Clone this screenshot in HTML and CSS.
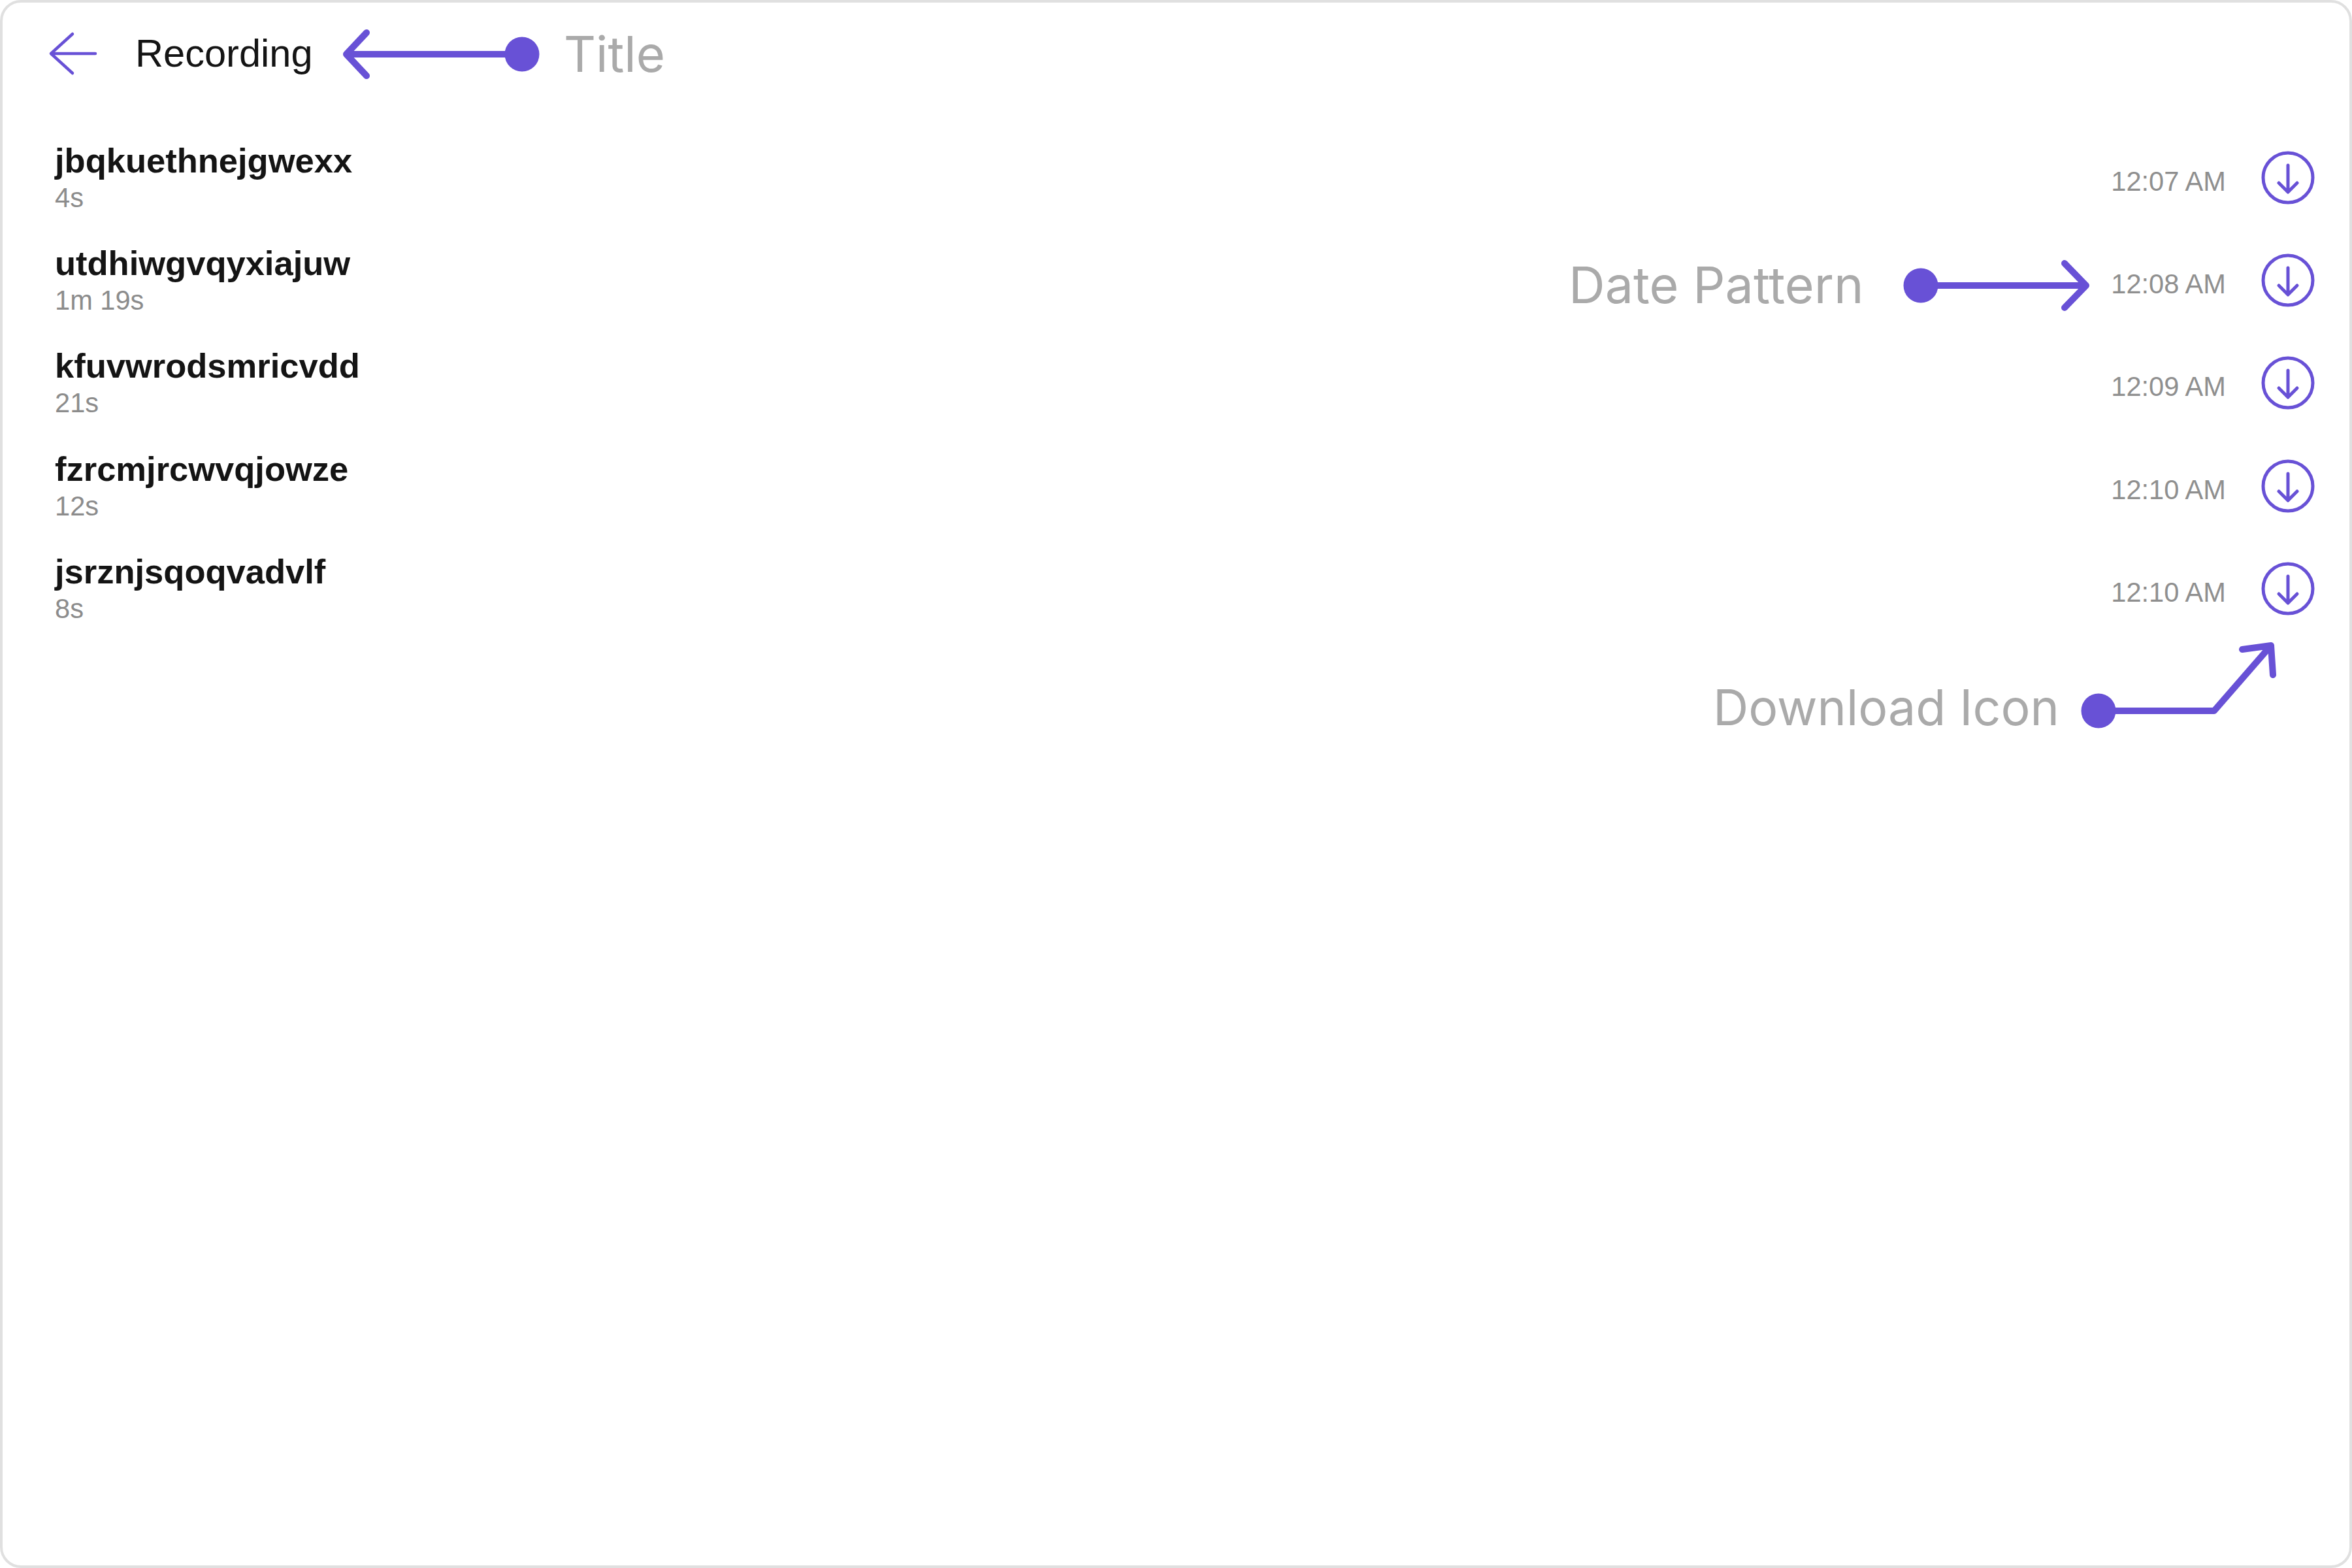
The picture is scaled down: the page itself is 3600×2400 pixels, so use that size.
FILE: index.html
```html
<!DOCTYPE html>
<html lang="en">
<head>
<meta charset="utf-8">
<title>Recording</title>
<link rel="stylesheet" href="styles.css">
</head>
<body>
<main class="card">
  <header class="head">
    <svg class="back" viewBox="0 0 76 72" width="76" height="72"><path d="M72 36H4M37 6 4 36l33 30" fill="none" stroke="#6851d6" stroke-width="4.500" stroke-linecap="round" stroke-linejoin="round"/></svg>
    <h1 class="title">Recording</h1>
  </header>
  <ul class="list">
    <li class="row">
      <div class="info"><div class="name">jbqkuethnejgwexx</div><div class="dur">4s</div></div>
      <span class="time">12:07 AM</span>
      <svg class="dl" viewBox="0 0 82 82" width="82" height="82"><circle cx="41" cy="41" r="38" fill="none" stroke="#6851d6" stroke-width="5"/><path d="M41 22V63M27 49 41 63 55 49" fill="none" stroke="#6851d6" stroke-width="5" stroke-linecap="round" stroke-linejoin="round"/></svg>
    </li>
    <li class="row">
      <div class="info"><div class="name">utdhiwgvqyxiajuw</div><div class="dur">1m 19s</div></div>
      <span class="time">12:08 AM</span>
      <svg class="dl" viewBox="0 0 82 82" width="82" height="82"><circle cx="41" cy="41" r="38" fill="none" stroke="#6851d6" stroke-width="5"/><path d="M41 22V63M27 49 41 63 55 49" fill="none" stroke="#6851d6" stroke-width="5" stroke-linecap="round" stroke-linejoin="round"/></svg>
    </li>
    <li class="row">
      <div class="info"><div class="name">kfuvwrodsmricvdd</div><div class="dur">21s</div></div>
      <span class="time">12:09 AM</span>
      <svg class="dl" viewBox="0 0 82 82" width="82" height="82"><circle cx="41" cy="41" r="38" fill="none" stroke="#6851d6" stroke-width="5"/><path d="M41 22V63M27 49 41 63 55 49" fill="none" stroke="#6851d6" stroke-width="5" stroke-linecap="round" stroke-linejoin="round"/></svg>
    </li>
    <li class="row">
      <div class="info"><div class="name">fzrcmjrcwvqjowze</div><div class="dur">12s</div></div>
      <span class="time">12:10 AM</span>
      <svg class="dl" viewBox="0 0 82 82" width="82" height="82"><circle cx="41" cy="41" r="38" fill="none" stroke="#6851d6" stroke-width="5"/><path d="M41 22V63M27 49 41 63 55 49" fill="none" stroke="#6851d6" stroke-width="5" stroke-linecap="round" stroke-linejoin="round"/></svg>
    </li>
    <li class="row">
      <div class="info"><div class="name">jsrznjsqoqvadvlf</div><div class="dur">8s</div></div>
      <span class="time">12:10 AM</span>
      <svg class="dl" viewBox="0 0 82 82" width="82" height="82"><circle cx="41" cy="41" r="38" fill="none" stroke="#6851d6" stroke-width="5"/><path d="M41 22V63M27 49 41 63 55 49" fill="none" stroke="#6851d6" stroke-width="5" stroke-linecap="round" stroke-linejoin="round"/></svg>
    </li>
  </ul>
  <svg class="callouts" viewBox="0 0 3600 2400" width="3600" height="2400">
    <g fill="none" stroke="#6851d6" stroke-width="10" stroke-linecap="round" stroke-linejoin="round">
      <path d="M800 83H530M561 50 530 83 561 116"/>
      <path d="M2940 437H3193M3160 403 3193 437 3160 471"/>
      <path d="M3212 1088H3389L3476 988M3432 994 3476 988 3479 1033"/>
    </g>
    <g fill="#6851d6">
      <circle cx="799" cy="83" r="26.500"/>
      <circle cx="2940" cy="437" r="26.500"/>
      <circle cx="3212" cy="1088" r="26.500"/>
    </g>
  </svg>
  <span class="note note-title">Title</span>
  <span class="note note-date">Date Pattern</span>
  <span class="note note-icon">Download Icon</span>
</main>
</body>
</html>
```

FILE: styles.css
```css
html, body {
  margin: 0;
  padding: 0;
  background: #fff;
}
.card {
  position: relative;
  box-sizing: border-box;
  width: 3600px;
  height: 2400px;
  border: 4px solid #e0e0e0;
  border-radius: 32px;
  background: #fff;
  font-family: "Liberation Sans", Arial, sans-serif;
  color: #141414;
}
.head {
  display: flex;
  align-items: center;
  height: 156px;
  padding-left: 70px;
}
.back {
  flex: none;
  margin-right: 57px;
}
.title {
  margin: 0;
  font-size: 59.600px;
  font-weight: 400;
  line-height: 72px;
}
.list {
  list-style: none;
  margin: 0;
  padding: 33px 53px 0 80px;
}
.row {
  display: flex;
  align-items: center;
  height: 157.300px;
}
.info {
  flex: 1;
  padding-bottom: 2px;
}
.name {
  font-size: 52.500px;
  font-weight: 700;
  line-height: 60px;
  margin-bottom: 4px;
}
.dur {
  font-size: 41.600px;
  line-height: 46px;
  color: #8c8c8c;
}
.time {
  font-size: 41.600px;
  line-height: 46px;
  color: #8f8f8f;
  margin: 12px 54px 0 0;
}
.dl {
  flex: none;
}
.callouts {
  position: absolute;
  left: -4px;
  top: -4px;
  pointer-events: none;
}
.note {
  position: absolute;
  font-family: Inter, "Liberation Sans", sans-serif;
  line-height: 90px;
  color: #aaaaaa;
  white-space: nowrap;
  will-change: transform;
}
.note-title { left: 859px; top: 33px; font-size: 76px; }
.note-date { left: 2397px; top: 387px; font-size: 77.200px; }
.note-icon { left: 2618px; top: 1034px; font-size: 75.200px; }
```
